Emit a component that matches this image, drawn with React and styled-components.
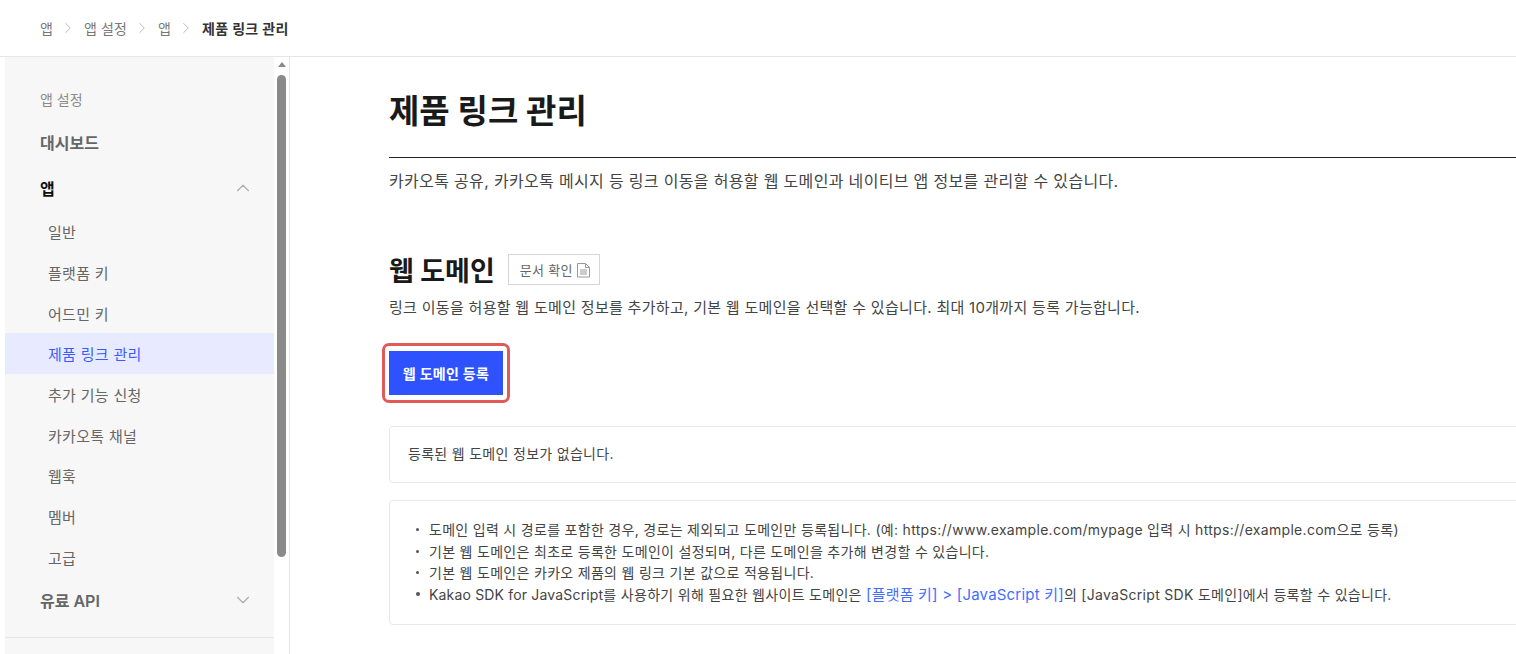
import React from 'react'
import styled, { createGlobalStyle } from 'styled-components'
import { ChevronRight, ChevronUp, ChevronDown } from 'lucide-react'

const GlobalStyle = createGlobalStyle`
html, body {
  margin: 0;
  height: 100%;
  overflow: hidden;
  background: white;
}
* { box-sizing: border-box; }
body {
  font-family: Inter, "Noto Sans CJK KR", sans-serif;
  color: #333;
}
`

const Page = styled.div`
height: 654px;
display: flex;
flex-direction: column;
`
const Breadcrumb = styled.div`
height: 57px;
flex: none;
display: flex;
align-items: center;
padding-left: 40px;
border-bottom: 1px solid #e6e6e6;
font-size: 14px;
letter-spacing: 0.1px;
`
const Crumb = styled.span`
color: ${p => (p.$current ? '#333' : '#777')};
font-weight: ${p => (p.$current ? 600 : 400)};
letter-spacing: ${p => (p.$current ? '0.3px' : 'inherit')};
`
const CrumbArrow = styled(ChevronRight)`
color: #aaa;
margin: 0 6.5px;
`
const Body = styled.div`
flex: 1;
display: flex;
min-height: 0;
padding-left: 5px;
`
const Sidebar = styled.nav`
width: 269px;
flex: none;
background: #f7f7f7;
padding-top: 33px;
`
const SectionLabel = styled.div`
font-size: 14px;
line-height: 20px;
color: #8a8a8a;
padding-left: 35px;
margin-bottom: 12px;
`
const MainItem = styled.div`
height: 40px;
margin-top: ${p => p.$top || 0}px;
margin-bottom: ${p => p.$gap || 0}px;
display: flex;
align-items: center;
justify-content: space-between;
padding: 0 20px 0 35px;
font-size: 16px;
font-weight: 600;
color: ${p => (p.$open ? '#111' : '#666')};
svg { color: #aaa; }
`
const SubItem = styled.div`
height: 40.7px;
display: flex;
align-items: center;
padding-left: 43px;
font-size: 15px;
letter-spacing: 0.3px;
color: ${p => (p.$active ? '#3a5cff' : '#666')};
background: ${p => (p.$active ? '#e8ebff' : 'transparent')};
`
const SideDivider = styled.div`
height: 1px;
background: #e6e6e6;
margin-top: 17px;
`
const ScrollTrack = styled.div`
width: 16px;
flex: none;
border-right: 1px solid #e6e6e6;
padding: 5px 3px 0 3px;
display: flex;
flex-direction: column;
align-items: center;
`
const ScrollUp = styled.div`
width: 0;
height: 0;
border-left: 4px solid transparent;
border-right: 4px solid transparent;
border-bottom: 5px solid #8a8a8a;
margin-bottom: 8px;
`
const ScrollThumb = styled.div`
width: 9px;
height: 482px;
background: #8a8a8a;
border-radius: 5px;
`
const Content = styled.main`
flex: 1;
min-width: 0;
padding: 32px 0 0 99px;
`
const Title = styled.h1`
margin: 0;
height: 69px;
border-bottom: 1px solid #222;
font-size: 33px;
line-height: 44px;
font-weight: 700;
color: #1a1a1a;
`
const Description = styled.p`
margin: 12px 0 0;
font-size: 16px;
line-height: 22px;
letter-spacing: 0.33px;
color: #444;
`
const SectionHead = styled.div`
display: flex;
align-items: center;
gap: 13px;
margin-top: 62px;
height: 31px;
`
const SectionTitle = styled.h2`
margin: 0;
font-size: 27px;
font-weight: 700;
color: #1a1a1a;
`
const DocButton = styled.div`
width: 92px;
height: 31px;
display: flex;
align-items: center;
padding-left: 11px;
gap: 3px;
border: 1px solid #d5d5d5;
font-size: 13px;
letter-spacing: 0.3px;
color: #666;
`
const SectionText = styled(Description)`
margin-top: 12px;
font-size: 15px;
letter-spacing: 0.3px;
`
const Highlight = styled.div`
width: 128px;
height: 60px;
margin: 24px 0 0 -7px;
padding: 5px 4px;
border: 3px solid #e05a5a;
border-radius: 7px;
`
const PrimaryButton = styled.button`
width: 100%;
height: 100%;
border: 0;
padding: 0;
background: #2f52ff;
color: white;
font-family: inherit;
font-size: 14px;
letter-spacing: 0.3px;
font-weight: 700;
`
const Box = styled.div`
margin-right: -8px;
border: 1px solid #e8e8e8;
border-radius: 4px;
font-size: 14px;
letter-spacing: 0.3px;
color: #444;
`
const EmptyBox = styled(Box)`
margin-top: 23px;
height: 57px;
padding: 0 0 4px 18px;
display: flex;
align-items: center;
`
const NoteBox = styled(Box)`
margin-top: 17px;
height: 125px;
padding: 18px 0 0 25px;
`
const NoteList = styled.ul`
margin: 0;
padding: 0;
list-style: none;
`
const Note = styled.li`
position: relative;
padding-left: 14px;
height: 21.7px;
line-height: 21px;
white-space: nowrap;
font-size: 14px;
&::before {
  content: '';
  position: absolute;
  left: 1px;
  top: 9px;
  width: 3px;
  height: 3px;
  border-radius: 50%;
  background: #555;
}
&:last-child::before {
  width: 4px;
  height: 4px;
  top: 8px;
}
`
const Latin = styled.span`
letter-spacing: 0.17px;
`
const Link = styled.span`
font-size: 15px;
letter-spacing: 0.2px;
color: #3f6fff;
`

const DocIcon = () => (
  <svg width="15" height="16" viewBox="0 0 15 16" fill="none" stroke="#999" strokeWidth="1">
    <path d="M1.500 1.500h8l4 4V15h-12z" />
    <path d="M9.500 1.500v4h4" />
    <path d="M4 8h7M4 10h7M4 12h7" />
  </svg>
)

const subItems = ['일반', '플랫폼 키', '어드민 키', '제품 링크 관리', '추가 기능 신청', '카카오톡 채널', '웹훅', '멤버', '고급']

const App = () => {
  return (
    <Page>
      <GlobalStyle />
      <Breadcrumb>
        <Crumb>앱</Crumb>
        <CrumbArrow size={18} strokeWidth={1.1} />
        <Crumb>앱 설정</Crumb>
        <CrumbArrow size={18} strokeWidth={1.1} />
        <Crumb>앱</Crumb>
        <CrumbArrow size={18} strokeWidth={1.1} />
        <Crumb $current>제품 링크 관리</Crumb>
      </Breadcrumb>
      <Body>
        <Sidebar>
          <SectionLabel>앱 설정</SectionLabel>
          <MainItem $gap={6}>대시보드</MainItem>
          <MainItem $open $gap={3.4}>
            앱
            <ChevronUp size={22} strokeWidth={1.2} />
          </MainItem>
          {subItems.map(item => (
            <SubItem key={item} $active={item === '제품 링크 관리'}>{item}</SubItem>
          ))}
          <MainItem $top={2.6}>
            유료 API
            <ChevronDown size={22} strokeWidth={1.2} />
          </MainItem>
          <SideDivider />
        </Sidebar>
        <ScrollTrack>
          <ScrollUp />
          <ScrollThumb />
        </ScrollTrack>
        <Content>
          <Title>제품 링크 관리</Title>
          <Description>카카오톡 공유, 카카오톡 메시지 등 링크 이동을 허용할 웹 도메인과 네이티브 앱 정보를 관리할 수 있습니다.</Description>
          <SectionHead>
            <SectionTitle>웹 도메인</SectionTitle>
            <DocButton>문서 확인 <DocIcon /></DocButton>
          </SectionHead>
          <SectionText>링크 이동을 허용할 웹 도메인 정보를 추가하고, 기본 웹 도메인을 선택할 수 있습니다. 최대 10개까지 등록 가능합니다.</SectionText>
          <Highlight>
            <PrimaryButton>웹 도메인 등록</PrimaryButton>
          </Highlight>
          <EmptyBox>등록된 웹 도메인 정보가 없습니다.</EmptyBox>
          <NoteBox>
            <NoteList>
              <Note>도메인 입력 시 경로를 포함한 경우, 경로는 제외되고 도메인만 등록됩니다. (예: https://www.example.com/mypage 입력 시 https://example.com으로 등록)</Note>
              <Note>기본 웹 도메인은 최초로 등록한 도메인이 설정되며, 다른 도메인을 추가해 변경할 수 있습니다.</Note>
              <Note>기본 웹 도메인은 카카오 제품의 웹 링크 기본 값으로 적용됩니다.</Note>
              <Note><Latin>Kakao SDK for JavaScript</Latin>를 사용하기 위해 필요한 웹사이트 도메인은 <Link>[플랫폼 키] &gt; [JavaScript 키]</Link>의 [JavaScript SDK 도메인]에서 등록할 수 있습니다.</Note>
            </NoteList>
          </NoteBox>
        </Content>
      </Body>
    </Page>
  )
}

export default App
